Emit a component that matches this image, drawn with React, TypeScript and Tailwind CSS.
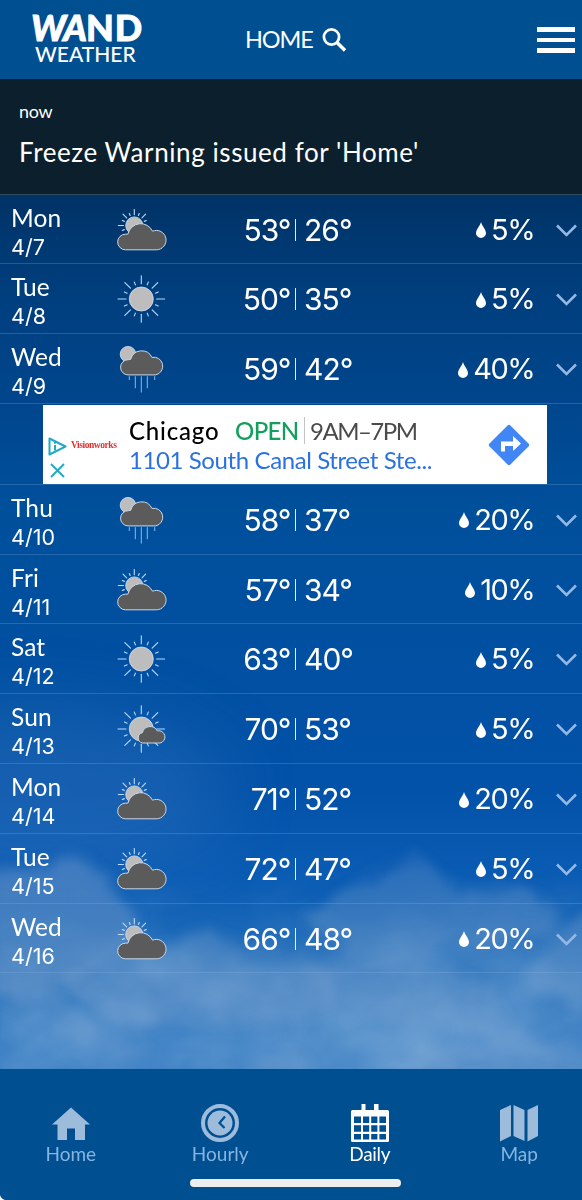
type Sky = "mostly-cloudy" | "sunny" | "rain" | "partly-cloudy";

type Day = {
  day: string;
  date: string;
  sky: Sky;
  high: number;
  low: number;
  precip: number;
};

const firstDays: Day[] = [
  { day: "Mon", date: "4/7", sky: "mostly-cloudy", high: 53, low: 26, precip: 5 },
  { day: "Tue", date: "4/8", sky: "sunny", high: 50, low: 35, precip: 5 },
  { day: "Wed", date: "4/9", sky: "rain", high: 59, low: 42, precip: 40 },
];

const laterDays: Day[] = [
  { day: "Thu", date: "4/10", sky: "rain", high: 58, low: 37, precip: 20 },
  { day: "Fri", date: "4/11", sky: "mostly-cloudy", high: 57, low: 34, precip: 10 },
  { day: "Sat", date: "4/12", sky: "sunny", high: 63, low: 40, precip: 5 },
  { day: "Sun", date: "4/13", sky: "partly-cloudy", high: 70, low: 53, precip: 5 },
  { day: "Mon", date: "4/14", sky: "mostly-cloudy", high: 71, low: 52, precip: 20 },
  { day: "Tue", date: "4/15", sky: "mostly-cloudy", high: 72, low: 47, precip: 5 },
  { day: "Wed", date: "4/16", sky: "mostly-cloudy", high: 66, low: 48, precip: 20 },
];

function Rays({ cx, cy, inner, long, short, from = 0, to = 15 }: {
  cx: number; cy: number; inner: number; long: number; short: number; from?: number; to?: number;
}) {
  const steps = Array.from({ length: to - from + 1 }, (_, i) => from + i);
  return (
    <g stroke="#b9dcff" strokeWidth="1.1" strokeLinecap="round">
      {steps.map((n) => {
        const a = (n * Math.PI) / 8;
        const r = n % 2 === 0 ? long : short;
        return (
          <line
            key={n}
            x1={cx + Math.cos(a) * inner}
            y1={cy + Math.sin(a) * inner}
            x2={cx + Math.cos(a) * r}
            y2={cy + Math.sin(a) * r}
          />
        );
      })}
    </g>
  );
}

function SkyIcon({ sky }: { sky: Sky }) {
  const cloud = { fill: "#5b5b5b", stroke: "#c9d8e8", strokeWidth: 1, strokeLinejoin: "round" as const };
  const sun = { fill: "#bdbdbd", stroke: "#d3e2f2", strokeWidth: 0.8 };

  return (
    <svg className="h-[70px] w-[70px] shrink-0" viewBox="0 0 70 70" fill="none">
      {sky === "mostly-cloudy" && (
        <>
          <Rays cx={28.3} cy={30.5} inner={10.8} long={16} short={13} from={7} to={15} />
          <circle cx="28.3" cy="30.5" r="8.6" {...sun} />
          <path d="M19.3 54.8A7.8 7.8 0 0 1 19.6 39.2L22 39A13 13 0 0 1 46.5 36.2A9.7 9.7 0 1 1 50.3 54.8Z" {...cloud} />
        </>
      )}
      {sky === "sunny" && (
        <>
          <Rays cx={35.3} cy={35} inner={15.3} long={23.3} short={18.3} />
          <circle cx="35.3" cy="35" r="12" {...sun} />
        </>
      )}
      {sky === "rain" && (
        <>
          <circle cx="22" cy="20.2" r="7.8" {...sun} />
          <path d="M22 40.9A7.6 7.6 0 0 1 22.3 25.7L24.7 25.3A11.3 11.3 0 0 1 45.9 23.4A8.8 8.8 0 1 1 49.7 40.9Z" {...cloud} />
          <path d="M23.3 42.2V46M29.3 42.2V54.2M35.3 42.2V58.5M41.3 42.2V54.2M48.7 42.2V46" stroke="#8db9ec" strokeWidth="1" />
        </>
      )}
      {sky === "partly-cloudy" && (
        <>
          <Rays cx={35.3} cy={35} inner={15.3} long={23.3} short={18.3} />
          <circle cx="35.3" cy="35" r="12" {...sun} />
          <path d="M36.3 49A5.3 5.3 0 0 1 36.4 38.7A8 8 0 0 1 51.3 36.9A6.2 6.2 0 1 1 54 49Z" {...cloud} />
        </>
      )}
    </svg>
  );
}

function DayRow({ item }: { item: Day }) {
  return (
    <div className="flex h-[69.8px] border-b border-[#8fb8e6]/25">
      <div className="w-[106px] shrink-0 pl-[11px] pt-[8px]">
        <p className="h-[29px] font-['Lato'] text-[24.5px] leading-[29px] tracking-[0.1px]">{item.day}</p>
        <p className="h-[29px] font-['Inter'] text-[21.5px] font-normal leading-[30px]">{item.date}</p>
      </div>

      <SkyIcon sky={item.sky} />

      <div className="flex h-[70px] grow items-center font-['Inter'] text-[30px] font-[380] leading-[36px] tracking-[-1px]">
        <span className="w-[114.5px] text-right">{item.high}°</span>
        <span className="ml-[4px] h-[22px] w-px bg-white/90" />
        <span className="ml-[8.5px]">{item.low}°</span>
      </div>

      <div className="flex h-[70px] items-center">
        <svg className="mr-[5px] mt-px h-[16px] w-[10px]" viewBox="0 0 10 16" fill="#fff">
          <path d="M5 0C6 4 10 7.500 10 11.200A5 4.800 0 0 1 0 11.200C0 7.500 4 4 5 0Z" />
        </svg>
        <span className="font-['Inter'] text-[29px] font-[380] leading-[36px] tracking-[-1.5px]">{item.precip}%</span>
        <svg className="ml-[21.800px] mr-[5px] mt-px h-[13px] w-[21px]" viewBox="0 0 21 13" fill="none">
          <path d="M1 1.500L10.500 11L20 1.500" stroke="#93b8e4" strokeWidth="2.600" />
        </svg>
      </div>
    </div>
  );
}

function AdBanner() {
  return (
    <div className="flex h-[81px] border-b border-[#8fb8e6]/25 pl-[43px] pt-[1px]">
      <div className="flex h-[79px] w-[504px] items-center bg-white">
        <div className="flex w-[28px] flex-col items-center gap-[7px] pt-[26px]">
          <svg className="h-[19px] w-[19px]" viewBox="0 0 19 19" fill="none" stroke="#1fa9c4" strokeWidth="2">
            <path d="M1.500 1.500L17.500 9.500L1.500 17.500Z" strokeLinejoin="round" />
            <path d="M7 8V13.500M7 5V6.800" />
          </svg>
          <svg className="h-[15px] w-[15px]" viewBox="0 0 15 15" stroke="#1fa9c4" strokeWidth="1.800">
            <path d="M1 1L14 14M14 1L1 14" />
          </svg>
        </div>
        <span className="w-[58px] pt-[2px] font-['Liberation_Serif'] text-[9.500px] font-bold leading-none tracking-[-0.45px] text-[#e0322f]">
          Visionworks
        </span>
        <div className="flex grow flex-col pt-px font-['Lato']">
          <div className="flex h-[29px] items-center text-[24px] leading-[29px]">
            <span className="w-[106px] font-medium tracking-[0.8px] text-black">Chicago</span>
            <span className="w-[69px] font-medium tracking-[-0.6px] text-[#12a05c]">OPEN</span>
            <span className="h-[27px] w-px bg-[#c4c4c4]" />
            <span className="ml-[5px] tracking-[-1.5px] text-[#4a4a4a]">9AM–7PM</span>
          </div>
          <p className="text-[24px] leading-[29px] tracking-[-0.4px] text-[#2b72e0]">1101 South Canal Street Ste...</p>
        </div>
        <svg className="mr-[16px] mt-px h-[44px] w-[44px]" viewBox="0 0 44 44">
          <rect x="7.200" y="7.200" width="29.600" height="29.600" rx="2" fill="#4285f4" transform="rotate(45 22 22)" />
          <path d="M14 28.500V18.500H26V13L34 20.500L26 28V23H18V28.500Z" fill="#fff" />
        </svg>
      </div>
    </div>
  );
}

// Sky photo stand-in: soft cloud banks roughened with noise
function SkyBackdrop() {
  return (
    <svg className="absolute inset-0 h-full w-full" viewBox="0 194 582 876" preserveAspectRatio="none">
      <defs>
        <linearGradient id="sky" x1="0" y1="0" x2="0" y2="1">
          <stop offset="0" stopColor="#003366" />
          <stop offset="0.12" stopColor="#003f7f" />
          <stop offset="0.24" stopColor="#00468d" />
          <stop offset="0.35" stopColor="#004f9b" />
          <stop offset="0.5" stopColor="#014fa0" />
          <stop offset="0.68" stopColor="#0252a9" />
          <stop offset="0.78" stopColor="#0b5cb4" />
          <stop offset="0.88" stopColor="#1f6cb9" />
          <stop offset="1" stopColor="#2c78c2" />
        </linearGradient>
        <filter id="haze" x="-40%" y="-40%" width="180%" height="180%">
          <feGaussianBlur stdDeviation="36" />
        </filter>
        <filter id="cloud" x="-10%" y="-10%" width="120%" height="120%">
          <feGaussianBlur stdDeviation="6" result="soft" />
          <feTurbulence type="fractalNoise" baseFrequency="0.022" numOctaves="3" seed="11" result="noise" />
          <feDisplacementMap in="soft" in2="noise" scale="30" xChannelSelector="R" yChannelSelector="G" />
          <feGaussianBlur stdDeviation="3.5" />
        </filter>
        <filter id="wisps" x="0" y="0" width="100%" height="100%">
          <feTurbulence type="fractalNoise" baseFrequency="0.011 0.016" numOctaves="4" seed="4" />
          <feColorMatrix values="0 0 0 0 0.6  0 0 0 0 0.74  0 0 0 0 0.88  2 0 0 0 -0.8" />
          <feGaussianBlur stdDeviation="2" />
        </filter>
        <linearGradient id="fade" x1="0" y1="0" x2="0" y2="1">
          <stop offset="0" stopColor="#000" />
          <stop offset="0.7" stopColor="#fff" />
        </linearGradient>
        <mask id="lower">
          <rect x="0" y="860" width="582" height="210" fill="url(#fade)" />
        </mask>
      </defs>
      <rect x="0" y="194" width="582" height="876" fill="url(#sky)" />
      <g filter="url(#haze)" fill="#7fa9d4">
        <ellipse cx="40" cy="790" rx="190" ry="80" opacity="0.17" />
        <ellipse cx="200" cy="1040" rx="280" ry="60" opacity="0.35" />
        <ellipse cx="480" cy="1020" rx="200" ry="80" opacity="0.35" />
      </g>
      <g filter="url(#cloud)" fill="#8dabd0">
        <path d="M-30 870Q20 875 50 866T105 872Q125 900 135 915L128 950Q80 985 60 1000L-30 990Z" opacity="0.38" />
        <path d="M60 985Q120 945 150 955Q190 930 225 936Q270 960 310 955Q350 985 335 1010Q260 1030 200 1012Q130 1050 60 985Z" opacity="0.32" />
        <path d="M300 925Q350 885 395 862Q430 855 445 888Q500 885 545 895Q560 925 540 945Q460 935 410 960Q350 970 300 925Z" opacity="0.27" />
        <path d="M550 940Q570 920 600 910V1010Q560 1000 530 985Z" opacity="0.28" />
        <path d="M310 965Q400 950 450 965Q500 1000 540 1050Q460 1020 400 1020Q350 1010 310 985Z" opacity="0.22" />
        <path d="M30 1000Q100 1010 150 1060L100 1080Q60 1030 30 1000Z" opacity="0.18" />
        <path d="M200 1090Q250 1055 300 1060L320 1090Z" opacity="0.26" />
        <path d="M370 1090Q400 1040 450 1050Q520 1030 600 1060V1090Z" opacity="0.26" />
      </g>
      <g mask="url(#lower)" opacity="0.24">
        <rect x="0" y="860" width="582" height="210" filter="url(#wisps)" />
      </g>
    </svg>
  );
}

const tabs = [
  {
    label: "Home",
    icon: <path d="M19 3.500L38 20.500H33V36H23V24.500H15V36H5.500V20.500H0Z" fill="currentColor" />,
  },
  {
    label: "Hourly",
    icon: (
      <>
        <circle cx="19" cy="19" r="17" stroke="currentColor" strokeWidth="4" />
        <circle cx="19" cy="19" r="12.500" fill="currentColor" />
        <path d="M24 12.500L18.500 19L23.500 24" stroke="#004f91" strokeWidth="2.200" />
      </>
    ),
  },
  {
    label: "Daily",
    icon: (
      <>
        <path d="M1.500 6H10.500V0H14.500V6H23V0H27.500V6H36.500Q38 6 38 7.500V36.500Q38 38 36.500 38H1.500Q0 38 0 36.500V7.500Q0 6 1.500 6Z" fill="currentColor" />
        <path
          d="M3 12.500h7v6.500H3zM12 12.500h6.200v6.500H12zM20.200 12.500h6.200v6.500h-6.200zM28.400 12.500h6.600v6.500h-6.600zM3 21.200h7v6.500H3zM12 21.200h6.200v6.500H12zM20.200 21.200h6.200v6.500h-6.200zM28.400 21.200h6.600v6.500h-6.600zM3 30h7v5.500H3zM12 30h6.200v5.500H12zM20.200 30h6.200v5.500h-6.200zM28.400 30h6.600v5.500h-6.600z"
          fill="#004f91"
        />
      </>
    ),
  },
  {
    label: "Map",
    icon: <path d="M0 6L11 1V32L0 37.500ZM13.500 1L24.500 6V37L13.500 32ZM27.500 6L38 1V32L27.500 37.500Z" fill="currentColor" />,
  },
];

function TabBar({ active }: { active: string }) {
  return (
    <nav className="relative h-[131px] bg-[#004f91]">
      <div className="-ml-[4px] -mr-[12px] grid grid-cols-4 pt-[35px]">
        {tabs.map((t) => (
          <div
            key={t.label}
            className={t.label === active ? "flex flex-col items-center text-white" : "flex flex-col items-center text-[#9dbbdb]"}
          >
            <svg className="h-[38px] w-[38px]" viewBox="0 0 38 38" fill="none">{t.icon}</svg>
            <span
              className={
                t.label === active
                  ? "font-['Lato'] text-[19px] leading-[24px] tracking-[-0.3px]"
                  : "font-['Lato'] text-[19px] leading-[24px] text-[#86b5e2]"
              }
            >
              {t.label}
            </span>
          </div>
        ))}
      </div>
      <div className="ml-[190px] mt-[13px] h-[8px] w-[211px] rounded-full bg-[#eeeeee]" />
      <svg className="absolute bottom-0 left-0 h-[5px] w-[5px]" viewBox="0 0 5 5">
        <path d="M0 0Q1 4 5 5H0Z" fill="#fff" />
      </svg>
    </nav>
  );
}

export default function App() {
  return (
    <div className="flex h-[1200px] w-[582px] flex-col overflow-hidden bg-[#004f91] text-white">
      <header className="flex h-[79px] shrink-0 items-start bg-[#004f91]">
        <div className="ml-[31px] w-[214px] pt-[14px] font-['Lato']">
          <p className="h-[29px] whitespace-nowrap text-[36px] font-black leading-[26px] [-webkit-text-stroke:0.9px_white]">
            <span className="italic tracking-[-1px]">WA</span>
            <span className="tracking-[0.8px]">ND</span>
          </p>
          <p className="ml-[4px] text-[21px] font-medium leading-[21px]">WEATHER</p>
        </div>
        <div className="flex h-[79px] items-center">
          <span className="w-[77px] font-['Lato'] text-[23.500px] leading-[29px] tracking-[-1.100px]">HOME</span>
          <svg className="h-[24px] w-[25px]" viewBox="0 0 25 24" fill="none" stroke="#fff">
            <circle cx="9.500" cy="9" r="7.600" strokeWidth="2.800" />
            <path d="M14.500 14L23 22.500" strokeWidth="3.600" />
          </svg>
        </div>
        <div className="ml-auto mr-[7px] mt-[27px] flex w-[38px] flex-col gap-[6px]">
          <span className="h-[4.500px] bg-white" />
          <span className="h-[4.500px] bg-white" />
          <span className="h-[4.500px] bg-white" />
        </div>
      </header>

      <section className="h-[115.500px] shrink-0 border-b border-[#31495c] bg-[#0c1f2c] pl-[19px] pt-[20px] font-['Lato']">
        <p className="text-[18px] leading-[24px] tracking-[-0.3px]">now</p>
        <p className="mt-[13px] text-[26px] leading-[32px] tracking-[0.580px]">Freeze Warning issued for 'Home'</p>
      </section>

      <main className="relative h-[874.500px] shrink-0">
        <SkyBackdrop />
        <div className="relative">
          {firstDays.map((d) => (
            <DayRow key={d.date} item={d} />
          ))}
          <AdBanner />
          {laterDays.map((d) => (
            <DayRow key={d.date} item={d} />
          ))}
        </div>
      </main>

      <TabBar active="Daily" />
    </div>
  );
}
